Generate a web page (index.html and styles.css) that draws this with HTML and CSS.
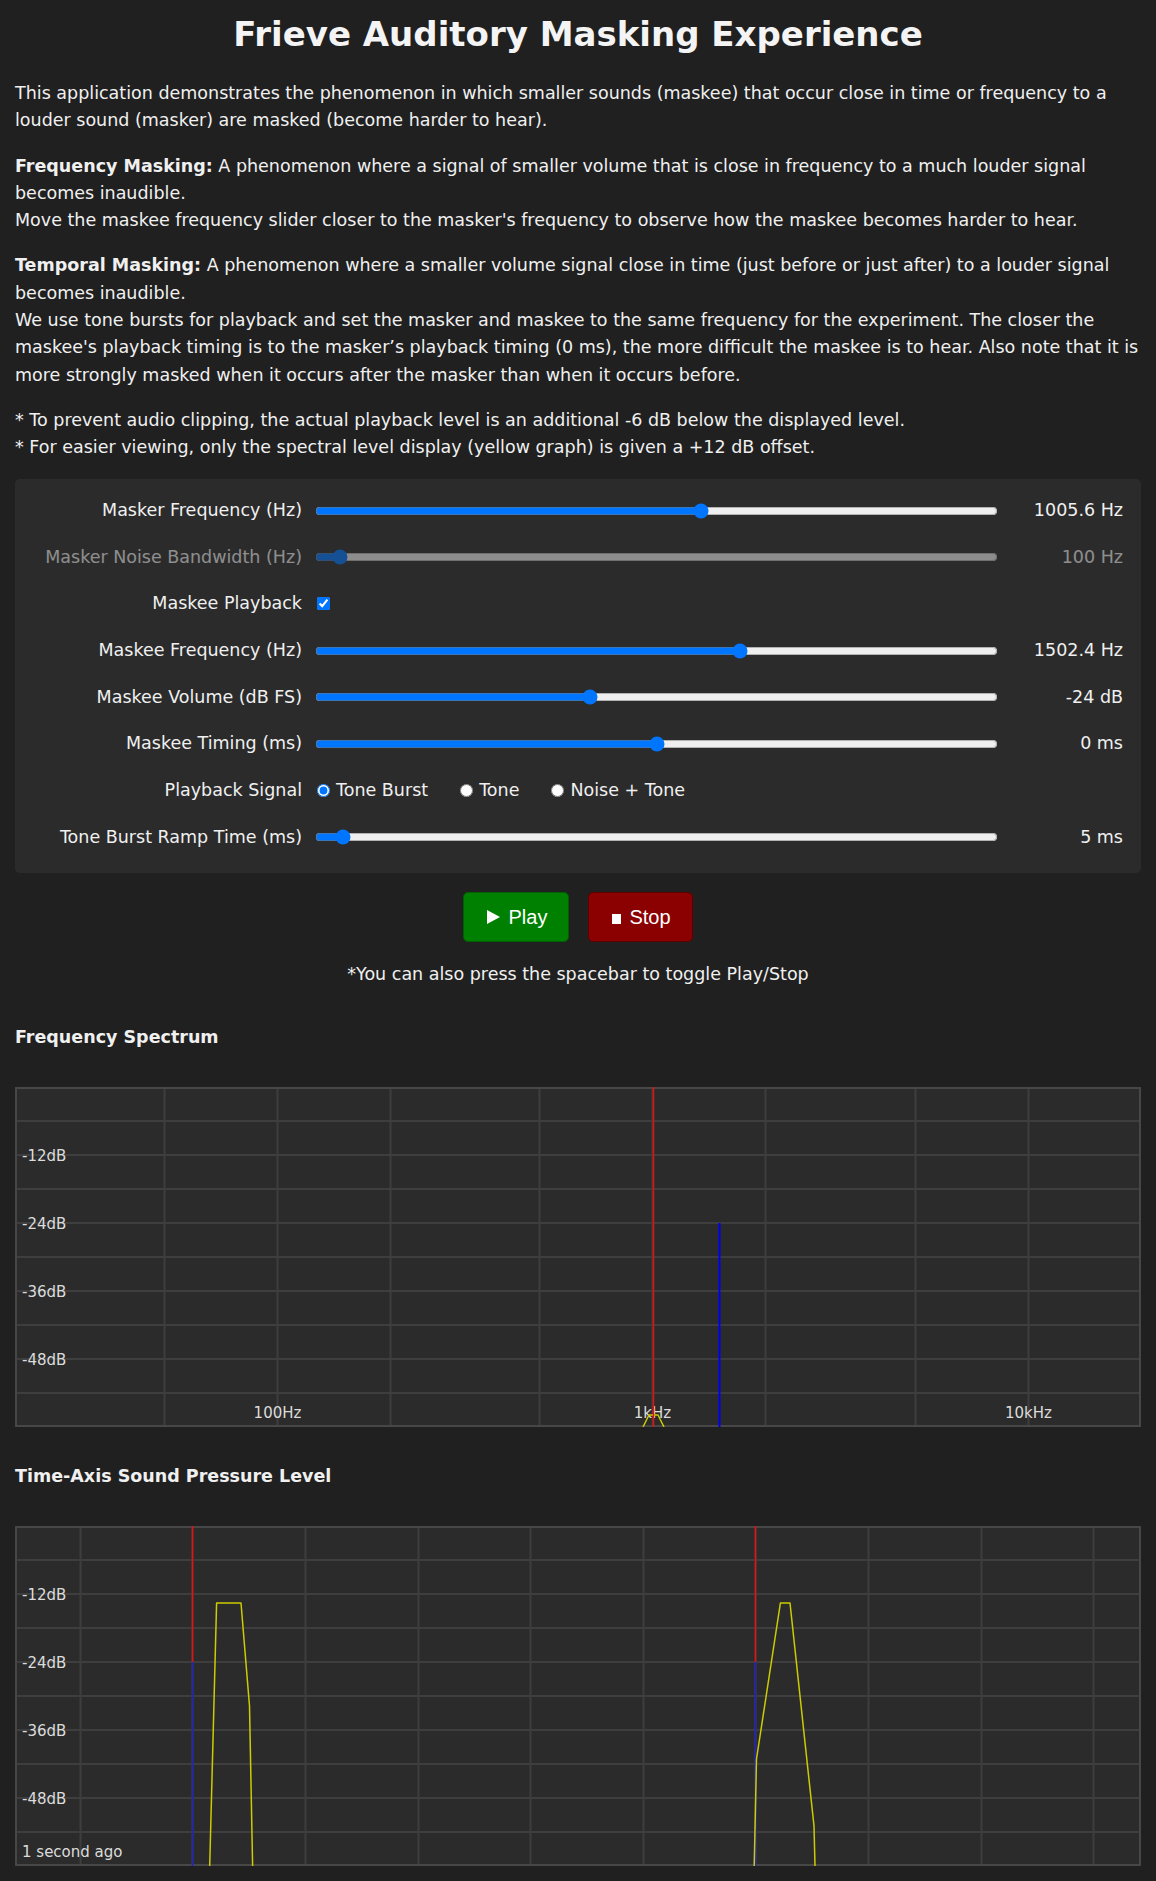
FILE: index.html
```html
<!DOCTYPE html>
<html lang="en">
<head>
<meta charset="utf-8">
<title>Frieve Auditory Masking Experience</title>
<link rel="stylesheet" href="styles.css">
</head>
<body>
<h1 class="title">Frieve Auditory Masking Experience</h1>

<p class="para"><span>This application demonstrates the phenomenon in which smaller sounds (maskee) that occur close in time or frequency to a</span> <span>louder sound (masker) are masked (become harder to hear).</span></p>

<p class="para"><strong class="term">Frequency Masking:</strong> <span>A phenomenon where a signal of smaller volume that is close in frequency to a much louder signal</span> <span>becomes inaudible.</span><br><span>Move the maskee frequency slider closer to the masker's frequency to observe how the maskee becomes harder to hear.</span></p>

<p class="para"><strong class="term">Temporal Masking:</strong> <span>A phenomenon where a smaller volume signal close in time (just before or just after) to a louder signal</span> <span>becomes inaudible.</span><br><span>We use tone bursts for playback and set the masker and maskee to the same frequency for the experiment. The closer the</span> <span>maskee's playback timing is to the masker’s playback timing (0 ms), the more difficult the maskee is to hear. Also note that it is</span> <span>more strongly masked when it occurs after the masker than when it occurs before.</span></p>

<p class="para">* To prevent audio clipping, the actual playback level is an additional -6 dB below the displayed level.<br>* For easier viewing, only the spectral level display (yellow graph) is given a +12 dB offset.</p>

<div class="controls">
  <div class="row">
    <label class="lbl" for="mf">Masker Frequency (Hz)</label>
    <input class="slider" id="mf" type="range" min="0" max="1000" value="567">
    <span class="val">1005.6 Hz</span>
  </div>
  <div class="row dim">
    <label class="lbl" for="nb">Masker Noise Bandwidth (Hz)</label>
    <input class="slider" id="nb" type="range" min="0" max="1000" value="26">
    <span class="val">100 Hz</span>
  </div>
  <div class="row">
    <label class="lbl" for="mp">Maskee Playback</label>
    <div class="cell"><input class="check" id="mp" type="checkbox" checked></div>
    <span class="val"></span>
  </div>
  <div class="row">
    <label class="lbl" for="ef">Maskee Frequency (Hz)</label>
    <input class="slider" id="ef" type="range" min="0" max="1000" value="625">
    <span class="val">1502.4 Hz</span>
  </div>
  <div class="row">
    <label class="lbl" for="ev">Maskee Volume (dB FS)</label>
    <input class="slider" id="ev" type="range" min="0" max="1000" value="400">
    <span class="val">-24 dB</span>
  </div>
  <div class="row">
    <label class="lbl" for="et">Maskee Timing (ms)</label>
    <input class="slider" id="et" type="range" min="0" max="1000" value="501">
    <span class="val">0 ms</span>
  </div>
  <div class="row">
    <span class="lbl">Playback Signal</span>
    <div class="radios">
      <label class="opt"><input class="radio" type="radio" name="sig" checked>Tone Burst</label>
      <label class="opt"><input class="radio" type="radio" name="sig">Tone</label>
      <label class="opt"><input class="radio" type="radio" name="sig">Noise + Tone</label>
    </div>
    <span class="val"></span>
  </div>
  <div class="row">
    <label class="lbl" for="rt">Tone Burst Ramp Time (ms)</label>
    <input class="slider" id="rt" type="range" min="0" max="1000" value="30">
    <span class="val">5 ms</span>
  </div>
</div>

<div class="buttons">
  <button class="btn play" type="button"><svg class="ico-play" width="13" height="14" viewBox="0 0 13 14"><polygon points="0,0 13,7 0,14" fill="#fff"/></svg>Play</button>
  <button class="btn stop" type="button"><svg class="ico-stop" width="9" height="10" viewBox="0 0 9 10"><rect x="0" y="0" width="9" height="10" fill="#fff"/></svg>Stop</button>
</div>
<p class="hint">*You can also press the spacebar to toggle Play/Stop</p>

<h2 class="section">Frequency Spectrum</h2>
<div class="graph">
<svg class="chart" width="1126" height="340" viewBox="0 0 1126 340">
  <rect x="0" y="0" width="1126" height="340" fill="#2b2b2b"/>
  <g class="grid">
    <line x1="0" y1="34" x2="1126" y2="34"/>
    <line x1="0" y1="68" x2="1126" y2="68"/>
    <line x1="0" y1="102" x2="1126" y2="102"/>
    <line x1="0" y1="136" x2="1126" y2="136"/>
    <line x1="0" y1="170" x2="1126" y2="170"/>
    <line x1="0" y1="204" x2="1126" y2="204"/>
    <line x1="0" y1="238" x2="1126" y2="238"/>
    <line x1="0" y1="272" x2="1126" y2="272"/>
    <line x1="0" y1="306" x2="1126" y2="306"/>
    <line x1="149.5" y1="0" x2="149.5" y2="340"/>
    <line x1="262.5" y1="0" x2="262.5" y2="340"/>
    <line x1="375.5" y1="0" x2="375.5" y2="340"/>
    <line x1="524.5" y1="0" x2="524.5" y2="340"/>
    <line x1="637.5" y1="0" x2="637.5" y2="340"/>
    <line x1="750.5" y1="0" x2="750.5" y2="340"/>
    <line x1="900.5" y1="0" x2="900.5" y2="340"/>
    <line x1="1013.5" y1="0" x2="1013.5" y2="340"/>
  </g>
  <rect class="frame" x="1" y="1" width="1124" height="338"/>
  <g class="axis">
    <text x="7" y="74">-12dB</text>
    <text x="7" y="142">-24dB</text>
    <text x="7" y="210">-36dB</text>
    <text x="7" y="278">-48dB</text>
    <text class="mid" x="262.5" y="331">100Hz</text>
    <text class="mid" x="637.5" y="331">1kHz</text>
    <text class="mid" x="1013.5" y="331">10kHz</text>
  </g>
  <polyline class="yellow" points="628,340 634,328 643,328 649,340"/>
  <line class="red" x1="638.5" y1="0" x2="638.5" y2="340"/>
  <line class="blue strong-blue" x1="704.5" y1="136" x2="704.5" y2="340"/>
</svg>
</div>

<h2 class="section">Time-Axis Sound Pressure Level</h2>
<div class="graph">
<svg class="chart" width="1126" height="340" viewBox="0 0 1126 340">
  <rect x="0" y="0" width="1126" height="340" fill="#2b2b2b"/>
  <g class="grid">
    <line x1="0" y1="34" x2="1126" y2="34"/>
    <line x1="0" y1="68" x2="1126" y2="68"/>
    <line x1="0" y1="102" x2="1126" y2="102"/>
    <line x1="0" y1="136" x2="1126" y2="136"/>
    <line x1="0" y1="170" x2="1126" y2="170"/>
    <line x1="0" y1="204" x2="1126" y2="204"/>
    <line x1="0" y1="238" x2="1126" y2="238"/>
    <line x1="0" y1="272" x2="1126" y2="272"/>
    <line x1="0" y1="306" x2="1126" y2="306"/>
    <line x1="65.5" y1="0" x2="65.5" y2="340"/>
    <line x1="177.5" y1="0" x2="177.5" y2="340"/>
    <line x1="290.5" y1="0" x2="290.5" y2="340"/>
    <line x1="403.5" y1="0" x2="403.5" y2="340"/>
    <line x1="515.5" y1="0" x2="515.5" y2="340"/>
    <line x1="628.5" y1="0" x2="628.5" y2="340"/>
    <line x1="740.5" y1="0" x2="740.5" y2="340"/>
    <line x1="853.5" y1="0" x2="853.5" y2="340"/>
    <line x1="966.5" y1="0" x2="966.5" y2="340"/>
    <line x1="1078.5" y1="0" x2="1078.5" y2="340"/>
  </g>
  <rect class="frame" x="1" y="1" width="1124" height="338"/>
  <g class="axis">
    <text x="7" y="74">-12dB</text>
    <text x="7" y="142">-24dB</text>
    <text x="7" y="210">-36dB</text>
    <text x="7" y="278">-48dB</text>
    <text x="7" y="331">1 second ago</text>
  </g>
  <line class="red" x1="177.5" y1="0" x2="177.5" y2="136"/>
  <line class="blue" x1="177.5" y1="136" x2="177.5" y2="340"/>
  <line class="red" x1="740.5" y1="0" x2="740.5" y2="136"/>
  <line class="blue" x1="740.5" y1="136" x2="740.5" y2="340"/>
  <polyline class="yellow" points="194.7,340 201.6,77 226,77 234.5,180 237.6,340"/>
  <polyline class="yellow" points="739.2,340 741.5,233 765.4,77 775,77 799,300 800,340"/>
</svg>
</div>
</body>
</html>
```

FILE: styles.css
```css
html {
  background: #202020;
}
body {
  margin: 0;
  padding: 0 15px 14px;
  background: #202020;
  color: #f0f0f0;
  font-family: "DejaVu Sans", Verdana, sans-serif;
  font-size: 17.5px;
  line-height: 27.3px;
}
.title {
  margin: 0;
  padding-top: 14px;
  font-size: 34px;
  line-height: 40px;
  font-weight: bold;
  text-align: center;
  color: #f4f4f4;
}
.para {
  margin: 26px 0 0;
}
.para + .para {
  margin-top: 18px;
}
.term {
  font-weight: bold;
}
.controls {
  margin-top: 17px;
  background: #2b2b2b;
  border-radius: 5px;
  padding: 17px 18px 21px;
  display: flex;
  flex-direction: column;
  gap: 16.7px;
}
.row {
  display: grid;
  grid-template-columns: 269px 1fr 112px;
  column-gap: 13px;
  align-items: center;
  height: 30px;
}
.row.dim {
  opacity: 0.5;
}
.lbl {
  text-align: right;
  white-space: nowrap;
}
.val {
  text-align: right;
  white-space: nowrap;
}
.slider {
  width: 100%;
  margin: 0;
}
.cell {
  display: flex;
  align-items: center;
}
.check {
  margin: 0 0 0 2px;
}
.radios {
  display: flex;
  align-items: center;
  gap: 30px;
}
.opt {
  display: inline-flex;
  align-items: center;
  gap: 6px;
}
.radio {
  margin: 0 0 0 2px;
}
.buttons {
  margin-top: 19px;
  display: flex;
  justify-content: center;
  gap: 19px;
}
.btn {
  height: 50px;
  padding: 0 21px 0 23px;
  border-radius: 5px;
  font-family: "Liberation Sans", Arial, sans-serif;
  font-size: 20px;
  color: #fff;
  display: inline-flex;
  align-items: center;
  gap: 8px;
  cursor: pointer;
}
.play {
  background: #008000;
  border: 1px solid #005f00;
}
.stop {
  background: #8b0000;
  border: 1px solid #5c0000;
}
.ico-play {
  display: block;
}
.ico-stop {
  display: block;
  margin-top: 4px;
}
.hint {
  margin: 19px 0 0;
  text-align: center;
}
.section {
  margin: 35px 0 0;
  font-size: 17.5px;
  line-height: 27.3px;
  font-weight: bold;
}
.graph {
  line-height: 0;
}
.section + .graph {
  margin-top: 36px;
}
.graph + .section {
  margin-top: 36px;
}
.chart {
  display: block;
}
.grid line {
  stroke: #3e3e3e;
  stroke-width: 2;
}
.frame {
  fill: none;
  stroke: #474747;
  stroke-width: 2;
}
.axis text {
  fill: #dcdcdc;
  font-family: "DejaVu Sans", Verdana, sans-serif;
  font-size: 15px;
}
.axis text.mid {
  text-anchor: middle;
}
.red {
  stroke: #e81010;
  stroke-width: 1.5;
}
.blue {
  stroke: #2020d0;
  stroke-width: 1.5;
}
.strong-blue {
  stroke: #0000f0;
  stroke-width: 2;
}
.yellow {
  fill: none;
  stroke: #cccc00;
  stroke-width: 1.5;
  stroke-linejoin: round;
}
```
